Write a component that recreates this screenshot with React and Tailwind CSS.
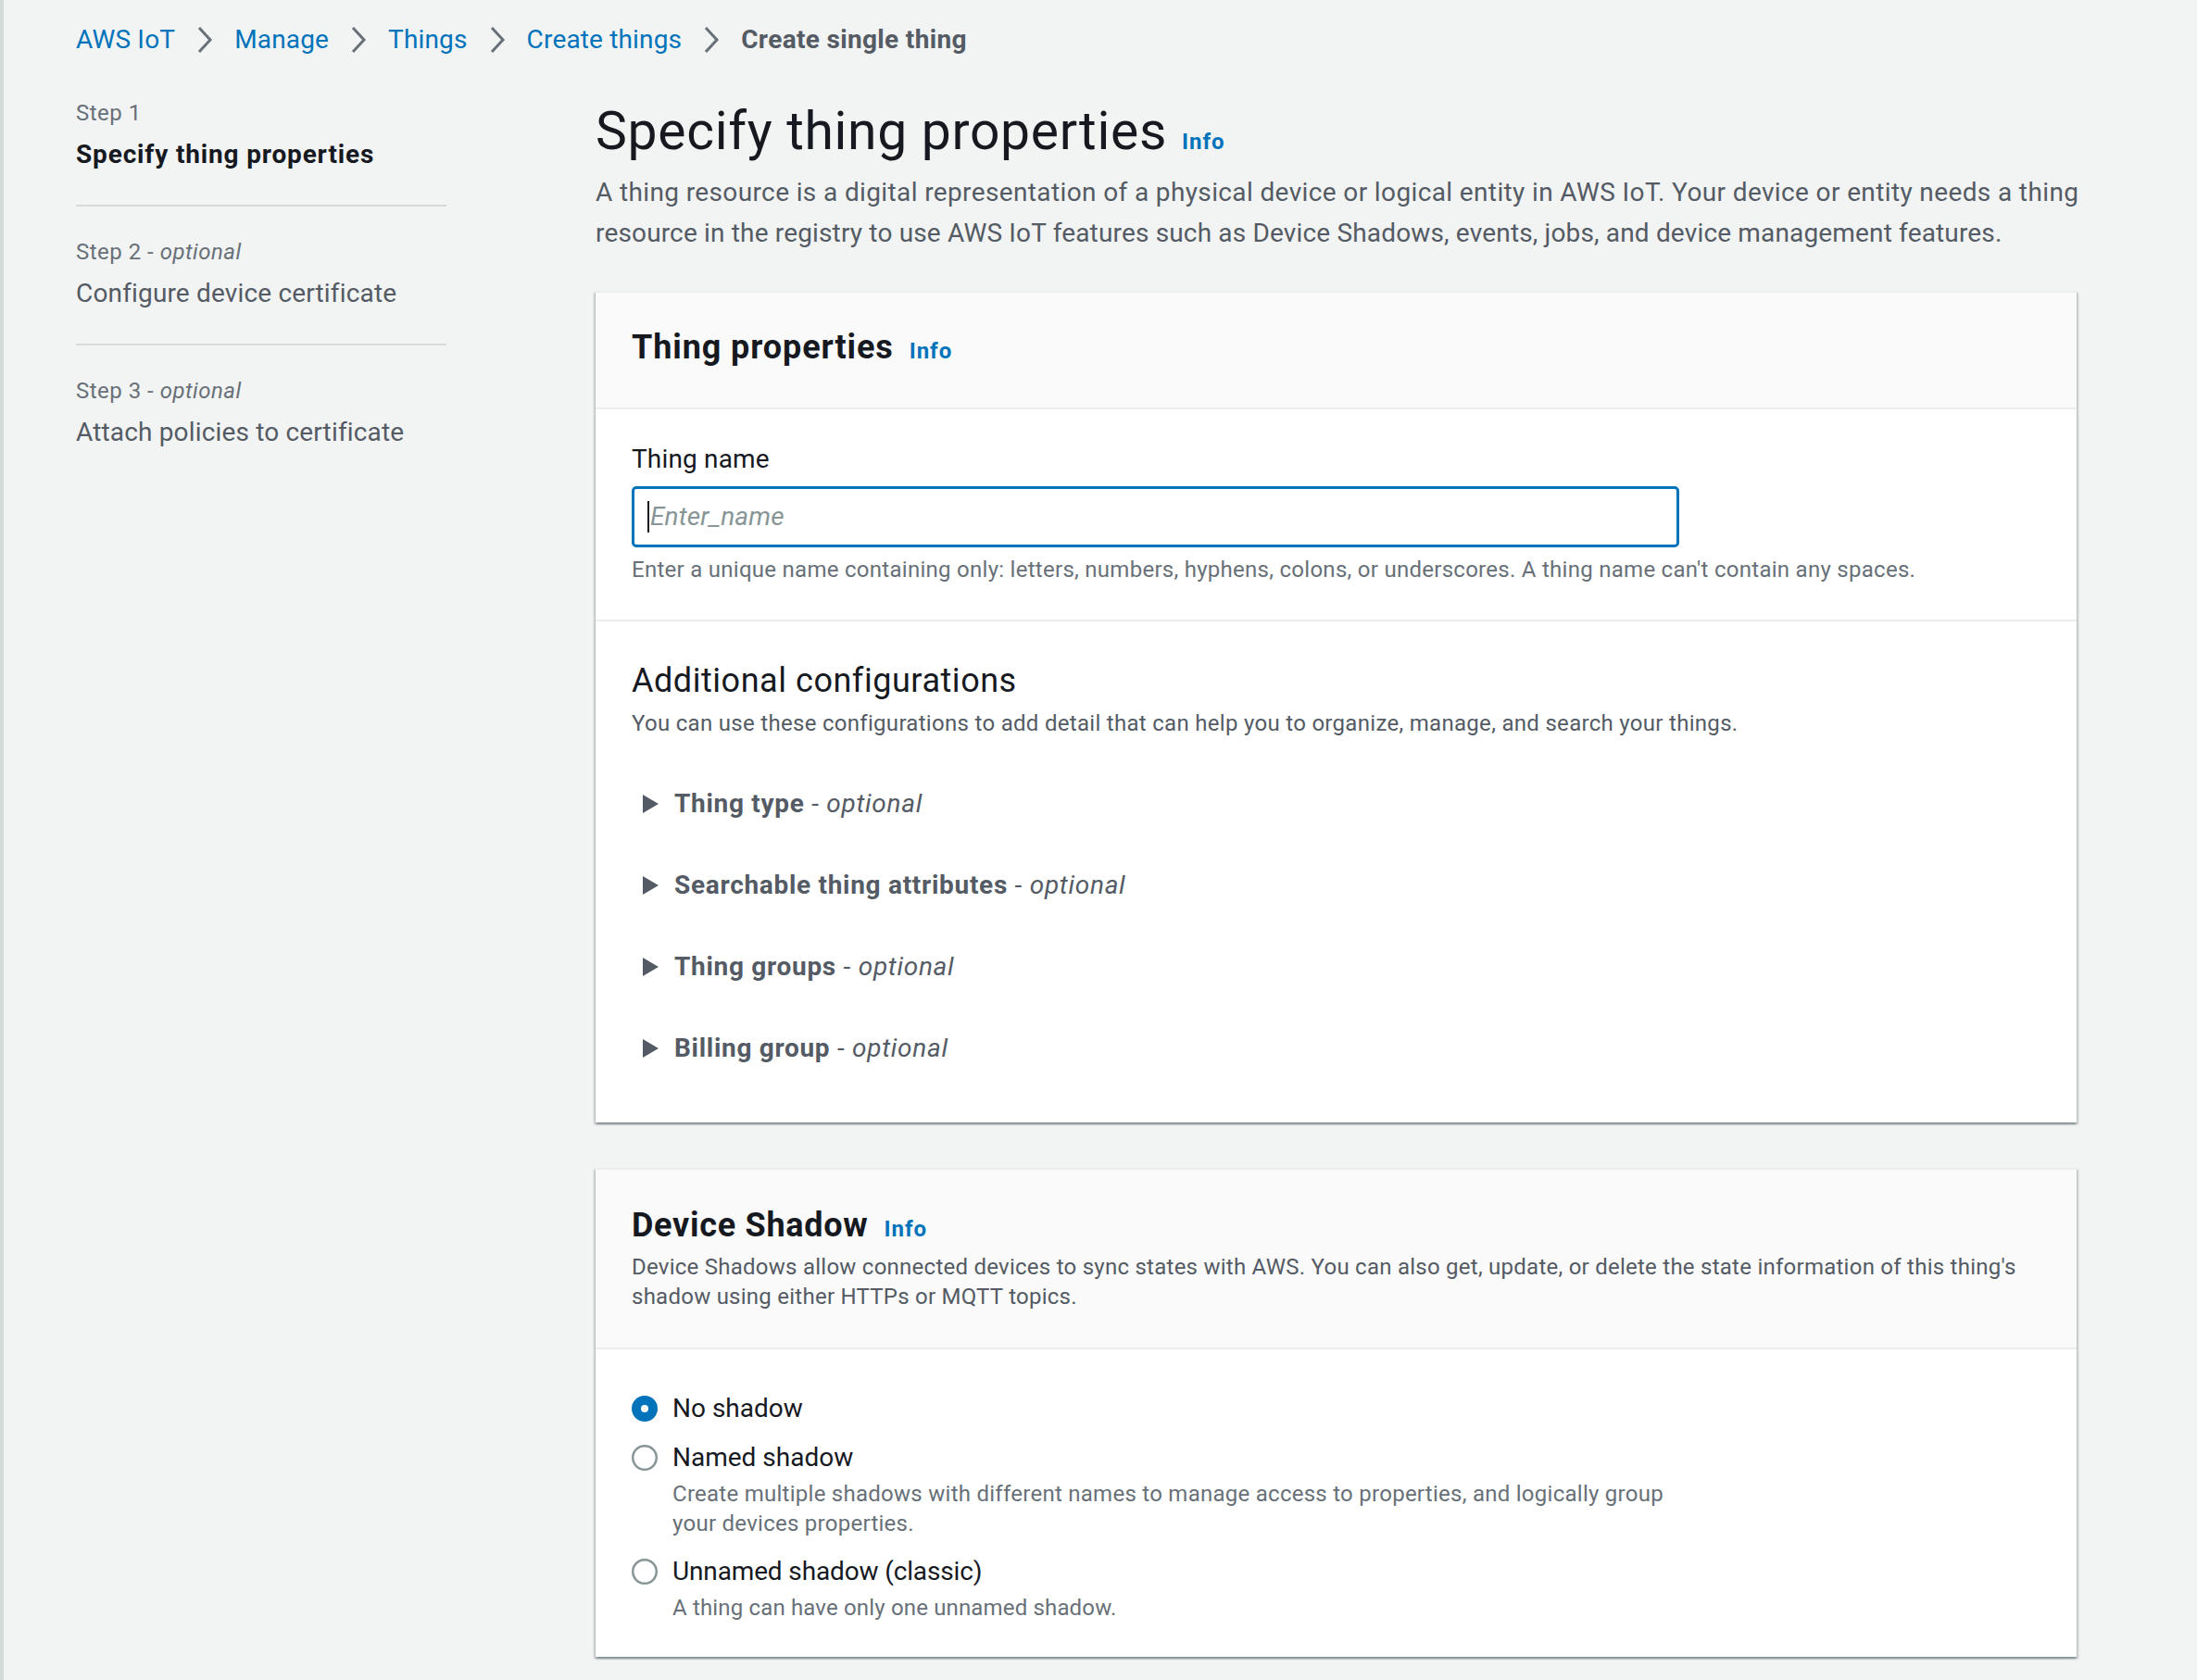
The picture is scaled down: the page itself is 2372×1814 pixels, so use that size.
import React from "react";

const Chevron = () => (
  <svg width="18" height="30" viewBox="0 0 18 30" className="mx-[23px] shrink-0">
    <polyline points="3,2 15,15 3,28" fill="none" stroke="#687078" strokeWidth="3" />
  </svg>
);

const Triangle = () => (
  <svg width="17" height="20" viewBox="0 0 17 20" className="shrink-0">
    <polygon points="0,0 17,10 0,20" fill="#545b64" />
  </svg>
);

const Radio = ({ checked }) => (
  <svg width="28" height="28" viewBox="0 0 28 28" className="shrink-0">
    {checked ? (
      <>
        <circle cx="14" cy="14" r="14" fill="#0073bb" />
        <circle cx="14" cy="14" r="4" fill="#ffffff" />
      </>
    ) : (
      <circle cx="14" cy="14" r="12.75" fill="#ffffff" stroke="#879596" strokeWidth="2.5" />
    )}
  </svg>
);

const Info = ({ className = "" }) => (
  <span className={"text-[24px] font-bold tracking-[0.04em] text-[#0073bb] " + className}>Info</span>
);

const Expander = ({ title }) => (
  <div className="h-[88px] flex items-center">
    <div className="w-[46px] pl-[12px] flex items-center">
      <Triangle />
    </div>
    <span className="text-[28px] leading-[44px] text-[#545b64] tracking-[0.025em]">
      <span className="font-bold">{title}</span> - <span className="italic">optional</span>
    </span>
  </div>
);

const NavItem = ({ step, optional, title, active, last }) => (
  <div className={"pt-[33px] " + (last ? "" : "pb-[32px] border-b-2 border-[#d5dbdb]")}>
    <div className="text-[24px] leading-[32px] text-[#687078] tracking-[0.02em]">
      {step}
      {optional && (
        <>
          {" - "}
          <span className="italic">optional</span>
        </>
      )}
    </div>
    <div
      className={
        "mt-[7px] text-[28px] leading-[44px] " +
        (active ? "font-bold tracking-[0.03em] text-[#16191f]" : "text-[#545b64]")
      }
    >
      {title}
    </div>
  </div>
);

const containerCls =
  "bg-white border-t-2 border-[#eaeded] shadow-[0_2px_2px_0_rgba(0,28,36,0.3),2px_2px_2px_0_rgba(0,28,36,0.15),-2px_2px_2px_0_rgba(0,28,36,0.15)]";

export default function App() {
  return (
    <div className="min-h-[1814px] w-[2372px] bg-[#f2f3f3] border-l-4 border-[#d5dbdb] font-['Roboto','Liberation_Sans',sans-serif] text-[#16191f] tracking-[0.01em]">
      {/* Breadcrumb */}
      <nav className="pl-[78px] pt-[21px] flex items-center text-[28px] leading-[44px]">
        <span className="text-[#0073bb]">AWS IoT</span>
        <Chevron />
        <span className="text-[#0073bb]">Manage</span>
        <Chevron />
        <span className="text-[#0073bb]">Things</span>
        <Chevron />
        <span className="text-[#0073bb]">Create things</span>
        <Chevron />
        <span className="text-[#545b64] font-bold tracking-[0.012em]">Create single thing</span>
      </nav>

      <div className="flex pl-[78px]">
        {/* Side navigation */}
        <aside className="w-[400px] shrink-0 pt-[8px]">
          <NavItem step="Step 1" title="Specify thing properties" active />
          <NavItem step="Step 2" optional title="Configure device certificate" />
          <NavItem step="Step 3" optional title="Attach policies to certificate" last />
        </aside>

        {/* Main */}
        <main className="ml-[161px] w-[1599px] shrink-0 pt-[41px] pb-[23px]">
          <div className="flex items-baseline">
            <h1 className="text-[57px] leading-[72px] font-normal tracking-[0.012em] text-[#16191f]">
              Specify thing properties
            </h1>
            <Info className="ml-[16px]" />
          </div>
          <p className="mt-[8px] text-[28px] leading-[44px] text-[#545b64] whitespace-nowrap">
            <span className="tracking-[0.0133em]">
              A thing resource is a digital representation of a physical device or logical entity in AWS IoT. Your device or entity needs a thing
            </span>
            <br />
            resource in the registry to use AWS IoT features such as Device Shadows, events, jobs, and device management features.
          </p>

          {/* Thing properties container */}
          <section className={"mt-[40px] " + containerCls}>
            <div className="bg-[#fafafa] border-b-2 border-[#eaeded] px-[39px] pt-[37px] pb-[43px] flex items-baseline">
              <h2 className="text-[36px] leading-[44px] font-bold tracking-[0.025em] text-[#16191f]">Thing properties</h2>
              <Info className="ml-[17px]" />
            </div>
            <div className="px-[39px] pt-[32px] pb-[38px]">
              <div className="text-[28px] leading-[44px] text-[#16191f]">Thing name</div>
              <div className="mt-[7px] w-[1131px] h-[66px] border-[3px] border-[#0073bb] rounded-[5px] bg-white flex items-center pl-[14px]">
                <span className="w-[2px] h-[34px] bg-[#16191f] mr-[1px]" />
                <span className="text-[28px] italic text-[#879596]">Enter_name</span>
              </div>
              <div className="mt-[8px] text-[24px] leading-[32px] text-[#687078] tracking-[0.0115em]">
                Enter a unique name containing only: letters, numbers, hyphens, colons, or underscores. A thing name can't contain any spaces.
              </div>
            </div>
            <div className="border-t-2 border-[#eaeded] px-[39px] pt-[42px] pb-[36px]">
              <h3 className="text-[36px] leading-[44px] font-normal tracking-[0.015em] text-[#16191f]">Additional configurations</h3>
              <div className="mt-[8px] text-[24px] leading-[32px] text-[#545b64] tracking-[0.0125em]">
                You can use these configurations to add detail that can help you to organize, manage, and search your things.
              </div>
              <div className="mt-[27px]">
                <Expander title="Thing type" />
                <Expander title="Searchable thing attributes" />
                <Expander title="Thing groups" />
                <Expander title="Billing group" />
              </div>
            </div>
          </section>

          {/* Device Shadow container */}
          <section className={"mt-[49px] " + containerCls}>
            <div className="bg-[#fafafa] border-b-2 border-[#eaeded] px-[39px] pt-[38px] pb-[39px]">
              <div className="flex items-baseline">
                <h2 className="text-[36px] leading-[44px] font-bold tracking-[0.02em] text-[#16191f]">Device Shadow</h2>
                <Info className="ml-[17px]" />
              </div>
              <p className="mt-[7px] text-[24px] leading-[32px] text-[#545b64] whitespace-nowrap tracking-[0.0105em]">
                Device Shadows allow connected devices to sync states with AWS. You can also get, update, or delete the state information of this thing's
                <br />
                shadow using either HTTPs or MQTT topics.
              </p>
            </div>
            <div className="px-[39px] pt-[42px] pb-[37px]">
              <div className="flex">
                <div className="h-[44px] flex items-center">
                  <Radio checked />
                </div>
                <div className="ml-[16px] text-[28px] leading-[44px] text-[#16191f] tracking-normal">No shadow</div>
              </div>
              <div className="flex mt-[9px]">
                <div className="h-[44px] flex items-center">
                  <Radio />
                </div>
                <div className="ml-[16px]">
                  <div className="text-[28px] leading-[44px] text-[#16191f] tracking-normal">Named shadow</div>
                  <div className="mt-[1px] text-[24px] leading-[32px] text-[#687078] whitespace-nowrap tracking-[0.011em]">
                    Create multiple shadows with different names to manage access to properties, and logically group
                    <br />
                    your devices properties.
                  </div>
                </div>
              </div>
              <div className="flex mt-[14px]">
                <div className="h-[44px] flex items-center">
                  <Radio />
                </div>
                <div className="ml-[16px]">
                  <div className="text-[28px] leading-[44px] text-[#16191f] tracking-[-0.005em]">Unnamed shadow (classic)</div>
                  <div className="mt-[1px] text-[24px] leading-[32px] text-[#687078]">
                    A thing can have only one unnamed shadow.
                  </div>
                </div>
              </div>
            </div>
          </section>
        </main>
      </div>
    </div>
  );
}
